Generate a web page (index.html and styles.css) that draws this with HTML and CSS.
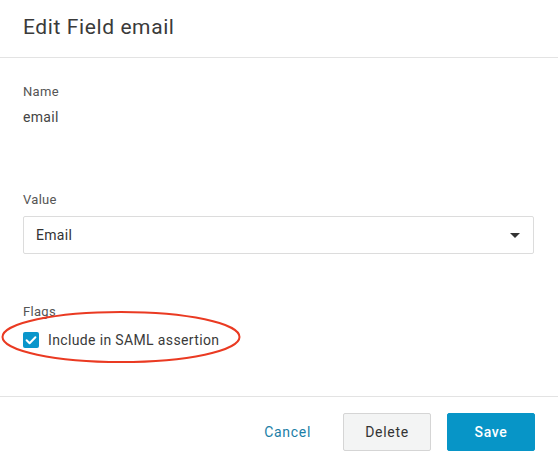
FILE: index.html
```html
<!DOCTYPE html>
<html lang="en">
<head>
<meta charset="utf-8">
<title>Edit Field email</title>
<link rel="stylesheet" href="styles.css">
</head>
<body>
<div class="dialog">
  <header class="dialog-header">
    <h1 class="dialog-title">Edit Field email</h1>
  </header>
  <main class="dialog-body">
    <div class="field">
      <div class="field-label">Name</div>
      <div class="field-value">email</div>
    </div>
    <div class="field field-select">
      <div class="field-label">Value</div>
      <div class="select">
        <span class="select-text">Email</span>
        <svg class="select-caret" width="10" height="5" viewBox="0 0 10 5"><path d="M0 0h10L5 5z" fill="#333"/></svg>
      </div>
    </div>
    <div class="field field-flags">
      <div class="field-label">Flags</div>
      <label class="checkbox-row">
        <span class="checkbox">
          <svg width="16" height="16" viewBox="0 0 16 16"><path d="M3.6 8.2l3 3 5.8-6" fill="none" stroke="#fff" stroke-width="2" stroke-linecap="round" stroke-linejoin="round"/></svg>
        </span>
        <span class="checkbox-text">Include in SAML assertion</span>
      </label>
      <svg class="annotation" width="244" height="56" viewBox="0 0 244 56"><ellipse cx="121" cy="27" rx="118.5" ry="25" fill="none" stroke="#ea3a22" stroke-width="2"/></svg>
    </div>
  </main>
  <footer class="dialog-footer">
    <button class="btn btn-link">Cancel</button>
    <button class="btn btn-default">Delete</button>
    <button class="btn btn-primary">Save</button>
  </footer>
</div>
</body>
</html>
```
FILE: styles.css
```css
* { box-sizing: border-box; }
html, body { margin: 0; padding: 0; background: #fff; }
body {
  font-family: Roboto, "Liberation Sans", sans-serif;
  color: #333;
  width: 558px;
  height: 467px;
  overflow: hidden;
}
.dialog { display: flex; flex-direction: column; height: 467px; }
.dialog-header {
  height: 58px;
  border-bottom: 1px solid #e3e3e3;
  padding: 0 23px;
  display: flex;
  align-items: center;
}
.dialog-title {
  margin: 0 0 3px 0;
  font-size: 21px;
  font-weight: 400;
  color: #3a3a3a;
  line-height: 26px;
  letter-spacing: 0.6px;
}
.dialog-body {
  flex: 1;
  padding: 26px 24px 0 23px;
}
.field-label {
  font-size: 13px;
  line-height: 16px;
  color: #555;
  letter-spacing: 0.3px;
}
.field-value {
  font-size: 14px;
  line-height: 18px;
  margin-top: 8px;
  color: #444;
  letter-spacing: 0.3px;
}
.field-select { margin-top: 66px; }
.select {
  margin-top: 8px;
  height: 38px;
  border: 1px solid #dcdcdc;
  border-radius: 2px;
  display: flex;
  align-items: center;
  justify-content: space-between;
  padding: 0 12px 0 12px;
  font-size: 14px;
  color: #333;
  letter-spacing: 0.3px;
}
.select-caret { margin-right: 1px; }
.field-flags { margin-top: 50px; position: relative; }
.checkbox-row {
  display: flex;
  align-items: center;
  margin-top: 11px;
  gap: 9px;
}
.checkbox {
  width: 16px;
  height: 16px;
  border-radius: 2px;
  background: #0a96cb;
  display: block;
}
.checkbox svg { display: block; }
.checkbox-text { font-size: 14px; color: #3a3a3a; line-height: 18px; letter-spacing: 0.36px; }
.annotation {
  position: absolute;
  left: -23px;
  top: 6px;
}
.dialog-footer {
  height: 71px;
  border-top: 1px solid #e3e3e3;
  display: flex;
  justify-content: flex-end;
  align-items: flex-start;
  padding: 16px 23px 0 0;
  gap: 16px;
}
.btn {
  font-family: Roboto, "Liberation Sans", sans-serif;
  height: 38px;
  width: 88px;
  font-size: 14px;
  letter-spacing: 0.7px;
  border-radius: 2px;
  cursor: pointer;
  padding: 0;
}
.btn-link {
  background: none;
  border: none;
  color: #1b7ea6;
  width: auto;
  padding: 0 16px;
}
.btn-default {
  background: #f3f4f4;
  border: 1px solid #d5d5d5;
  color: #333;
}
.btn-primary {
  background: #0795c7;
  border: 1px solid #0795c7;
  color: #fff;
  font-weight: 500;
}
```
